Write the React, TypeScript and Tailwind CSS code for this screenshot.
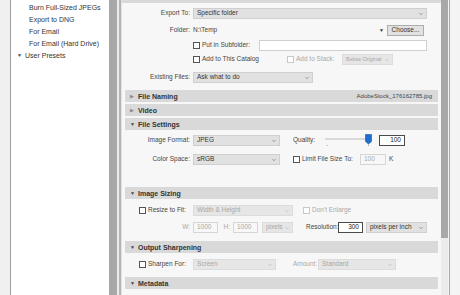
import { ChevronDown } from "lucide-react";

type SelectProps = { value: string; width: string; disabled?: boolean; small?: boolean };

function Select({ value, width, disabled = false, small = false }: SelectProps) {
  return (
    <div
      className={`${width} flex h-[11px] shrink-0 items-center justify-between border pl-[3px] pr-[2px] ${
        disabled
          ? "border-[#dcdcdc] bg-[#e6e6e6] text-[#a6a6a6]"
          : "border-[#cfcfcf] bg-[#e1e1e1] text-[#333]"
      }`}
    >
      <span className={`whitespace-nowrap leading-none ${small ? "text-[5.5px]" : ""}`}>{value}</span>
      <ChevronDown
        className={`h-[6px] w-[6px] shrink-0 ${disabled ? "text-[#b8b8b8]" : "text-[#777]"}`}
        strokeWidth={2.5}
      />
    </div>
  );
}

function Input({
  value,
  width,
  dark,
  disabled,
}: {
  value: string;
  width: string;
  dark?: boolean;
  disabled?: boolean;
}) {
  return (
    <div
      className={`${width} flex h-[11px] shrink-0 items-center border px-[3px] leading-none ${
        dark
          ? "justify-end border-[#4a4a4a] bg-white text-[#222]"
          : disabled
            ? "border-[#d6d6d6] bg-[#f7f7f7] text-[#a8a8a8]"
            : "border-[#cfcfcf] bg-white text-[#333]"
      }`}
    >
      {value}
    </div>
  );
}

function Check({ disabled }: { disabled?: boolean }) {
  return (
    <div
      className={`h-[7px] w-[7px] shrink-0 border bg-white ${
        disabled ? "border-[#c8c8c8]" : "border-[#555]"
      }`}
    />
  );
}

function Label({ text, gray }: { text: string; gray?: boolean }) {
  return (
    <div
      className={`w-[68px] shrink-0 text-right leading-none ${gray ? "text-[#a8a8a8]" : "text-[#444]"}`}
    >
      {text}
    </div>
  );
}

function Header({
  title,
  open,
  right,
  className = "",
}: {
  title: string;
  open?: boolean;
  right?: string;
  className?: string;
}) {
  return (
    <div
      className={`mx-[3px] flex h-[12px] shrink-0 items-center justify-between bg-[#d9d9d9] pl-[5px] pr-[6px] ${className}`}
    >
      <div className="flex items-center">
        <span className={`w-[8px] text-[5px] leading-none ${open ? "text-[#444]" : "text-[#888]"}`}>
          {open ? "▼" : "▶"}
        </span>
        <span className="text-[7px] font-bold leading-none text-[#333]">{title}</span>
      </div>
      {right && <span className="text-[6px] leading-none text-[#444]">{right}</span>}
    </div>
  );
}

const presets = ["Burn Full-Sized JPEGs", "Export to DNG", "For Email", "For Email (Hard Drive)"];

export default function App() {
  return (
    <div className="flex h-[295px] w-[460px] overflow-hidden bg-[#f0f0f0] font-['Liberation_Sans',Arial,sans-serif] text-[6.5px]">
      {/* left edge */}
      <div className="w-[10px] shrink-0" />

      {/* preset list */}
      <div className="w-[99px] shrink-0 border-l border-[#a0a0a0] bg-white pt-[1px] text-[7px] text-[#333]">
        {presets.map((p) => (
          <div key={p} className="flex h-[12px] items-center pl-[18px] leading-none">
            {p}
          </div>
        ))}
        <div className="flex h-[12px] items-center pl-[6px] leading-none">
          <span className="w-[8px] text-[5px] text-[#444]">▼</span>
          <span>User Presets</span>
        </div>
      </div>

      {/* splitter */}
      <div className="w-[8px] shrink-0 bg-[#a8a8a8]" />
      <div className="w-[2px] shrink-0 bg-[#ececec]" />
      <div className="w-[2px] shrink-0 bg-[#b4b4b4]" />
      <div className="w-[1px] shrink-0 bg-[#e2e2e2]" />

      {/* settings panel */}
      <div className="flex w-[319px] shrink-0 flex-col bg-[#f7f7f7]">
        <div className="h-[3px] shrink-0 bg-[#d9d9d9]" />

        {/* Export location */}
        <div className="mt-[5px] flex items-center pr-[14px]">
          <Label text="Export To:" />
          <div className="ml-[3px]">
            <Select value="Specific folder" width="w-[234px]" />
          </div>
        </div>
        <div className="mt-[6px] flex h-[11px] items-center pr-[14px]">
          <Label text="Folder:" />
          <span className="ml-[3px] leading-none text-[#444]">N:\Temp</span>
          <span className="ml-auto text-[5px] leading-none text-[#333]">▼</span>
          <div className="ml-[3px] mr-[3px] flex h-[11px] w-[37px] items-center justify-center border border-[#adadad] bg-[#e1e1e1] leading-none text-[#333]">
            Choose...
          </div>
        </div>
        <div className="mt-[4px] flex h-[11px] items-center pr-[14px]">
          <div className="w-[71px] shrink-0" />
          <Check />
          <span className="ml-[2px] leading-none text-[#444]">Put in Subfolder:</span>
          <div className="ml-auto">
            <Input value="" width="w-[168px]" />
          </div>
        </div>
        <div className="mt-[3px] flex h-[11px] items-center">
          <div className="w-[71px] shrink-0" />
          <div className="flex w-[94px] shrink-0 items-center">
            <Check />
            <span className="ml-[2px] leading-none text-[#444]">Add to This Catalog</span>
          </div>
          <Check disabled />
          <span className="ml-[2px] w-[46px] leading-none text-[#a8a8a8]">Add to Stack:</span>
          <Select value="Below Original" width="w-[51px]" disabled small />
        </div>
        <div className="mt-[7px] flex items-center">
          <Label text="Existing Files:" />
          <div className="ml-[3px]">
            <Select value="Ask what to do" width="w-[120px]" />
          </div>
        </div>

        <Header title="File Naming" right="AdobeStock_176162785.jpg" className="mt-[7px]" />
        <Header title="Video" className="mt-[2px]" />
        <Header title="File Settings" open className="mt-[2px]" />

        <div className="mt-[5px] flex h-[11px] items-center">
          <Label text="Image Format:" />
          <div className="ml-[3px]">
            <Select value="JPEG" width="w-[87px]" />
          </div>
          <span className="ml-[13px] w-[30px] leading-none text-[#444]">Quality:</span>
          <svg width="50" height="13" viewBox="0 0 50 13" className="shrink-0">
            <line x1="2" y1="5" x2="44" y2="5" stroke="#cfcfcf" strokeWidth="1.5" />
            <circle cx="4" cy="11.5" r="0.6" fill="#999" />
            <circle cx="45.5" cy="11.5" r="0.6" fill="#999" />
            <path d="M42.5 0.5 H48.5 V7.5 L45.5 10 L42.5 7.5 Z" fill="#1f6fd1" stroke="#17539f" strokeWidth="0.6" />
          </svg>
          <div className="ml-[6px]">
            <Input value="100" width="w-[26px]" dark />
          </div>
        </div>
        <div className="mt-[8px] flex h-[11px] items-center">
          <Label text="Color Space:" />
          <div className="ml-[3px]">
            <Select value="sRGB" width="w-[87px]" />
          </div>
          <div className="ml-[13px]">
            <Check />
          </div>
          <span className="ml-[2px] w-[58px] leading-none text-[#444]">Limit File Size To:</span>
          <Input value="100" width="w-[26px]" disabled />
          <span className="ml-[3px] leading-none text-[#444]">K</span>
        </div>

        <Header title="Image Sizing" open className="mt-[22px]" />
        <div className="mt-[6px] flex h-[11px] items-center">
          <div className="w-[17px] shrink-0" />
          <Check />
          <span className="ml-[2px] w-[45px] leading-none text-[#444]">Resize to Fit:</span>
          <Select value="Width & Height" width="w-[100px]" disabled />
          <div className="ml-[10px]">
            <Check disabled />
          </div>
          <span className="ml-[2px] leading-none text-[#a8a8a8]">Don't Enlarge</span>
        </div>
        <div className="mt-[6px] flex h-[11px] items-center">
          <Label text="W:" gray />
          <div className="ml-[3px]">
            <Input value="1000" width="w-[25px]" disabled />
          </div>
          <span className="w-[15px] pr-[3px] text-right leading-none text-[#a8a8a8]">H:</span>
          <Input value="1000" width="w-[25px]" disabled />
          <div className="ml-[4px]">
            <Select value="pixels" width="w-[31px]" disabled />
          </div>
          <span className="ml-[13px] w-[32px] leading-none text-[#444]">Resolution:</span>
          <Input value="300" width="w-[25px]" dark />
          <div className="ml-[3px]">
            <Select value="pixels per inch" width="w-[61px]" />
          </div>
        </div>

        <Header title="Output Sharpening" open className="mt-[8px]" />
        <div className="mt-[6px] flex h-[11px] items-center">
          <div className="w-[17px] shrink-0" />
          <Check />
          <span className="ml-[2px] w-[45px] leading-none text-[#444]">Sharpen For:</span>
          <Select value="Screen" width="w-[83px]" disabled />
          <span className="ml-[17px] w-[25px] leading-none text-[#a8a8a8]">Amount:</span>
          <Select value="Standard" width="w-[78px]" disabled />
        </div>

        <Header title="Metadata" open className="mt-[7px]" />
      </div>

      {/* scrollbar */}
      <div className="flex w-[7px] shrink-0 flex-col bg-[#ececec]">
        <div className="h-[238px] bg-[#a8a8a8]" />
      </div>
      <div className="w-[1px] shrink-0 bg-[#f4f4f4]" />
      <div className="w-[1px] shrink-0 bg-[#a8a8a8]" />
      <div className="flex-1 bg-[#f4f4f4]" />
    </div>
  );
}
